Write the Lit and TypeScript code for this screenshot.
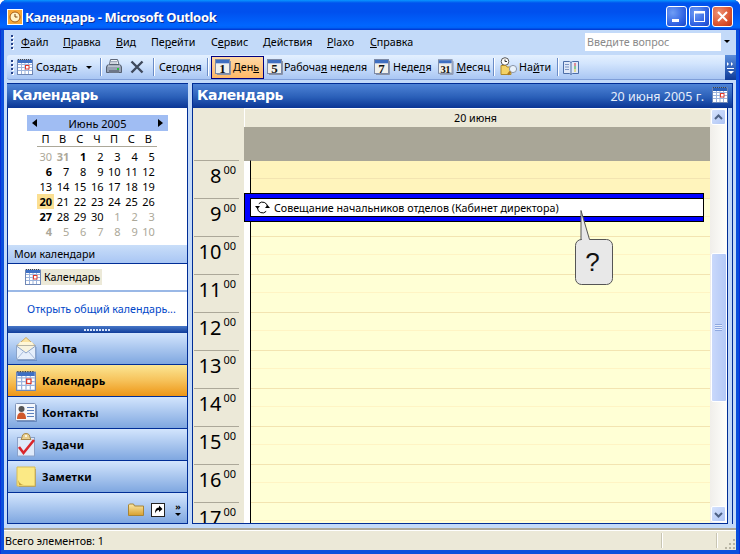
import { LitElement, html, css } from "lit";
import { customElement } from "lit/decorators.js";

const calIcon = (w = 16, h = 16, hd = "#3d6fc4") => html`<svg width=${w} height=${h} viewBox="0 0 16 16">
  <rect x=".5" y="1" width="15" height="14.5" fill="#fff" stroke="#6f87b5"/>
  <rect x="1" y="1" width="14" height="3" fill=${hd}/>
  <path d="M1 0.5h14" stroke="#444" stroke-dasharray="1 1"/>
  <path d="M1 5.5h14M1 8.5h14M1 11.5h14M4.5 4v11M8 4v11M11.5 4v11" stroke="#9db4dc"/>
  <rect x="8.5" y="6.5" width="3.5" height="3.5" fill="#fff" stroke="#e0392b"/>
</svg>`;

const pageIcon = (n: string) => html`<svg width="16" height="16" viewBox="0 0 16 16">
  <rect x=".5" y=".5" width="14" height="14" fill="#f1f1ec" stroke="#7d8aa6"/>
  <rect x="1" y="1" width="13" height="3" fill="#3f6fc0"/>
  <path d="M1 4.500h13" stroke="#b9c7e2"/>
  <path d="M15.500 2v13.500H2" fill="none" stroke="#8a93a8"/>
  <text x="7.500" y="14" text-anchor="middle" class=${n.length > 1 ? "num two" : "num"}>${n}</text>
</svg>`;

const printIcon = html`<svg width="16" height="16" viewBox="0 0 16 16">
  <path d="M4.500 .5h7l1.500 5h-9.500z" fill="#f4f6fa" stroke="#5d6679"/>
  <path d="M5 2.500h6M5 4h6" stroke="#a5adbf"/>
  <path d="M1.500 6h13l1 2v5.500h-15V8z" fill="#98a2b4" stroke="#555f70"/>
  <path d="M2 7h12" stroke="#dde2ea"/>
  <rect x="3" y="11" width="10" height="3" fill="#6d7688"/>
  <rect x="11" y="9" width="2" height="2" fill="#27c23a"/>
</svg>`;

const xIcon = html`<svg width="14" height="14" viewBox="0 0 14 14"><path d="M1.500 1.500l11 11M12.500 1.500l-11 11" stroke="#3f495c" stroke-width="2.400"/></svg>`;

const findIcon = html`<svg width="18" height="20" viewBox="0 0 18 20">
  <circle cx="5" cy="4.500" r="3.800" fill="#fff" stroke="#555"/>
  <path d="M5 2.500v2h2" fill="none" stroke="#333"/>
  <path d="M1 8.500h5l1 1.500h4v7.500H1z" fill="#f3d266" stroke="#b08a2a"/>
  <circle cx="13" cy="12" r="3.600" fill="#e9f2fb" stroke="#8c97a8"/>
  <path d="M10.500 14.500l-2.500 3" stroke="#b07a20" stroke-width="2"/>
</svg>`;

const bookIcon = html`<svg width="16" height="15" viewBox="0 0 16 15">
  <path d="M.5 1.500h6l1.500 1 1.500-1h6v12h-6L8 14.500l-1.500-1h-6z" fill="#dfe8f8" stroke="#4c6ea8"/>
  <path d="M8 2.500v11.500" stroke="#4c6ea8"/>
  <path d="M2 4.500h4M2 7h4M2 9.500h4" stroke="#7b95c4"/>
  <path d="M12 3v3" stroke="#d33"/><path d="M12 6v3" stroke="#3a3"/><path d="M12 9v3" stroke="#dc3"/>
</svg>`;

const mailIcon = html`<svg width="22" height="24" viewBox="0 0 22 24">
  <path d="M1.500 9L11 .5 20.500 9z" fill="#fbe3a0" stroke="#c9a86a"/>
  <path d="M5 5h12l2 3H3z" fill="#fff6d6"/>
  <rect x="1.500" y="9" width="19" height="13.500" fill="#e6effb" stroke="#8ba3c8"/>
  <path d="M1.500 9l9.500 7 9.500-7" fill="#f8f3de" stroke="#8ba3c8"/>
  <path d="M1.500 22.500l7-8M20.500 22.500l-7-8" stroke="#a9bcda" fill="none"/>
  <path d="M2.500 23.500h19.500V10" stroke="#5b7fb8" fill="none" opacity=".6"/>
</svg>`;

const contactsIcon = html`<svg width="22" height="19" viewBox="0 0 22 19">
  <rect x=".5" y=".5" width="20" height="17" rx="1" fill="#f4f7fc" stroke="#7e93b8"/>
  <circle cx="6.500" cy="6" r="3" fill="#555"/>
  <path d="M2 16c0-5 2-6.500 4.500-6.500S11 11 11 16z" fill="#d0582a"/>
  <path d="M12 4.500h7M12 7.500h7M12 10.500h7M12 13.500h7" stroke="#5f82bd"/>
  <path d="M21.500 2v16.500H2" fill="none" stroke="#4d6da5" opacity=".6"/>
</svg>`;

const tasksIcon = html`<svg width="20" height="24" viewBox="0 0 20 24">
  <rect x="1.500" y="4.500" width="17" height="18.500" fill="#dfeafa" stroke="#8aa1c8"/>
  <path d="M6 4.500c0-2 1-4 4-4s4 2 4 4l1 2H5z" fill="#e8cf8f" stroke="#a9894a"/>
  <circle cx="10" cy="3" r="1" fill="#fff"/>
  <path d="M3 14l4.500 6L18 7" fill="none" stroke="#d9262c" stroke-width="2.600"/>
</svg>`;

const notesIcon = html`<svg width="20" height="22" viewBox="0 0 20 22">
  <path d="M1 1h18v19H1z" fill="#fbe985" stroke="#d9bd55"/>
  <path d="M2 14c2 4 4 5 7 5H3z" fill="#c9a53a"/>
  <path d="M19.500 3v17.500H3" fill="none" stroke="#b59a50" opacity=".7"/>
</svg>`;

const folderIcon = html`<svg width="16" height="13" viewBox="0 0 16 13">
  <defs><linearGradient id="fg" x1="0" y1="0" x2="0" y2="1"><stop offset="0" stop-color="#fbeaa8"/><stop offset="1" stop-color="#d89f2e"/></linearGradient></defs>
  <path d="M.5 12.500V2l1-1h4l1 2h9v9.500z" fill="url(#fg)" stroke="#a88435"/>
</svg>`;

const shortcutIcon = html`<svg width="14" height="14" viewBox="0 0 14 14">
  <rect x=".5" y=".5" width="13" height="13" fill="#fff" stroke="#222"/>
  <path d="M4 11c0-4 1-5.500 4-6V3l3.500 3.500L8 9.500V7.500C6 7.500 5 9 4 11z" fill="#000" transform="translate(0 -.5)"/>
</svg>`;

const recurIcon = html`<svg width="15" height="13" viewBox="0 0 15 13">
  <path d="M12.500 6A5 5 0 0 0 3.800 2.700M2.500 7a5 5 0 0 0 8.700 3.300" fill="none" stroke="#000"/>
  <path d="M0 5.500h5L2.500 8.500zM10 7.500h5l-2.500-3z" fill="#000" transform="translate(0 -.5)"/>
</svg>`;

const label = (t: string, u: number) =>
  html`<span>${t.slice(0, u)}<u>${t[u]}</u>${t.slice(u + 1)}</span>`;

const MENU = [
  { t: "Файл", u: 0, w: 42 }, { t: "Правка", u: 0, w: 53 }, { t: "Вид", u: 0, w: 35 },
  { t: "Перейти", u: 2, w: 60 }, { t: "Сервис", u: 1, w: 52 }, { t: "Действия", u: 0, w: 64 },
  { t: "Plaxo", u: 0, w: 43 }, { t: "Справка", u: 0, w: 60 },
];

const WEEKS = [
  [["30","m"],["31","mb"],["1","b"],["2",""],["3",""],["4",""],["5",""]],
  [["6","b"],["7",""],["8",""],["9",""],["10",""],["11",""],["12",""]],
  [["13",""],["14",""],["15",""],["16",""],["17",""],["18",""],["19",""]],
  [["20","t"],["21",""],["22",""],["23",""],["24",""],["25",""],["26",""]],
  [["27","b"],["28",""],["29",""],["30",""],["1","m"],["2","m"],["3","m"]],
  [["4","mb"],["5","m"],["6","m"],["7","m"],["8","m"],["9","m"],["10","m"]],
];

const NAV = [
  { t: "Почта", i: mailIcon },
  { t: "Календарь", i: calIcon(22, 20), sel: true },
  { t: "Контакты", i: contactsIcon },
  { t: "Задачи", i: tasksIcon },
  { t: "Заметки", i: notesIcon },
];

const HOURS = [8, 9, 10, 11, 12, 13, 14, 15, 16, 17];

@customElement("app-root")
export class AppRoot extends LitElement {
  static styles = css`
    :host { display: block; width: 740px; height: 554px; overflow: hidden; background: #fff;
      font-family: "Noto Sans", "DejaVu Sans", sans-serif; font-size: 10.7px; color: #000; }
    * { box-sizing: border-box; }
    u { text-underline-offset: 1px; }
    .win { height: 554px; display: flex; flex-direction: column; border-radius: 7px 7px 0 0; overflow: hidden; background: #0a4fdc; box-shadow: inset 1px 0 #0831d9, inset -1px 0 #0831d9; }
    .title { height: 30px; flex: none; display: flex; align-items: center; padding: 3px 7px 0 7px;
      background: linear-gradient(#0997ff 0, #0053ee 10%, #0050ee 40%, #0066ff 85%, #0061f5 93%, #003dd7 97%, #003dd7 100%); }
    .tlogo { width: 16px; height: 16px; margin-right: 2px; flex: none; background: #f5a83a; border: 1px solid #fff; display: grid; place-items: center; }
    .ttext { font: bold 13px "Noto Sans", sans-serif; letter-spacing: -.35px; color: #fff; text-shadow: 1px 1px 0 #0a2f9c; white-space: nowrap; }
    .tbtns { margin-left: auto; display: flex; gap: 2px; }
    .tb { width: 21px; height: 21px; border: 1px solid #fff; border-radius: 3px; background: radial-gradient(circle at 30% 30%, #6f9df5, #2a5ce0 70%, #1d46c0); display: grid; place-items: center; }
    .tb.close { background: radial-gradient(circle at 30% 30%, #ef9274, #d9502c 65%, #b8341b); }

    .client { flex: 1; margin: 0 4px; background: #c3daf9; display: flex; flex-direction: column; min-height: 0; }
    .menu { height: 25px; flex: none; display: flex; align-items: center; padding: 0 0 2px 3px; }
    .grip { flex: none; width: 10px; display: flex; flex-direction: column; gap: 2px; padding-left: 4px; }
    .grip i { display: block; width: 2px; height: 2px; background: #27438a; box-shadow: 1px 1px 0 #fff; }
    .mitem { flex: none; padding-left: 4px; white-space: nowrap; }
    .ask { margin-left: auto; margin-right: 3px; width: 148px; height: 18px; background: #fff; display: flex; align-items: center; padding-left: 2px; color: #8a8a8a; }
    .ask span { flex: 1; }
    .ask b { width: 12px; height: 18px; background: #c3daf9; display: grid; place-items: center; }
    .tri { width: 0; height: 0; border: 3px solid transparent; border-top: 3px solid #000; border-bottom: 0; }
    .tbar { height: 25px; flex: none; margin-left: 3px; display: flex; align-items: center; position: relative; border-radius: 3px 0 0 3px; border-bottom: 1px solid #7f9ed8;
      background: linear-gradient(#e4f0ff, #d3e5fd 35%, #a9c6f3 100%); }
    .ti { flex: none; display: flex; align-items: center; height: 23px; white-space: nowrap; }
    .sp1 { width: 1px; flex: none; }
    .sp2 { width: 2px; flex: none; }
    .sp3 { width: 3px; flex: none; }
    .sep { flex: none; width: 6px; display: flex; justify-content: center; }
    .sep i { display: block; width: 1px; height: 18px; background: #6a8cc8; box-shadow: 1px 0 0 #fff; }
    .ti.on { border: 1px solid #000080; background: linear-gradient(#ffd9a6, #ffb866); padding-left: 3px; margin-left: 1px; }
    .num { font: bold 13px "Liberation Serif", serif; fill: #111; }
    .num.two { font-size: 11px; letter-spacing: -.5px; }
    .chev { position: absolute; right: 0; top: 0; width: 11px; height: 25px; background: linear-gradient(#5a8edc, #0e3a98); display: flex; flex-direction: column; align-items: center; justify-content: center; gap: 2px; }
    .chev i { display: block; width: 7px; height: 1px; background: #fff; }

    .panes { flex: 1; min-height: 0; display: flex; gap: 4px; padding: 3px 0 4px 3px; margin-right: 3px; }
    .left { width: 181px; flex: none; display: flex; flex-direction: column; border: 1px solid #002d96; border-top: 0; background: #fff; }
    .right { flex: 1; min-width: 0; display: flex; flex-direction: column; border-right: 1px solid #002d96; border-left: 1px solid #002d96; background: #c3daf9; }
    .phead { height: 25px; flex: none; display: flex; align-items: center; padding: 0 0 2px 4px; color: #fff; border-top: 1px solid #002d96;
      background: linear-gradient(#4f84d6, #2a5fb8 55%, #0a3595); font: bold 14px "DejaVu Sans", sans-serif; letter-spacing: -.45px; }
    .left .phead { margin: 0 -1px; padding-left: 5px; width: 181px; }
    .pdate { margin-left: auto; margin: 2px 8px 0 auto; font: 12.5px "Noto Sans", sans-serif; color: #e6eefc; letter-spacing: 0; }

    .cal { height: 137px; flex: none; padding: 7px 0 0 19px; font-size: 11px; }
    .mon { width: 141px; height: 16px; background: #a0bdf3; display: flex; align-items: center; justify-content: space-between; padding: 0 5px; }
    .larr { border: 4px solid transparent; border-right: 5px solid #000; border-left: 0; }
    .rarr { border: 4px solid transparent; border-left: 5px solid #000; border-right: 0; }
    .dow, .days { display: grid; grid-template-columns: repeat(7, 17.14px); margin-left: 10px; width: 120px; }
    .dow { height: 15px; box-sizing: content-box; border-bottom: 1px solid #aca899; align-items: center; text-align: center; }
    .days { grid-auto-rows: 15px; align-items: center; margin-top: 2px; }
    .d { text-align: right; padding-right: 2px; line-height: 15px; }
    .d.b { font-weight: 700; }
    .d.m { color: #aca899; }
    .d.mb { color: #aca899; font-weight: 700; }
    .d.t { background: #fbdf92; font-weight: 700; }

    .mine { height: 19px; flex: none; display: flex; align-items: center; padding-left: 6px; background: linear-gradient(#c9def9, #a9c6f4); border-bottom: 1px solid #002d96; }
    .mylist { height: 28px; flex: none; padding: 5px 0 0 17px; display: flex; align-items: flex-start; border-bottom: 2px solid #9ab8e6; }
    .mylist span { background: #ece9d8; height: 16px; width: 61px; display: flex; align-items: center; padding-left: 3px; }
    .open { height: 34px; flex: none; display: flex; align-items: center; padding: 0 0 1px 19px; color: #0046c8; white-space: nowrap; }
    .split { height: 7px; flex: none; background: linear-gradient(#4777c8, #103d9a); display: flex; justify-content: center; align-items: center; gap: 1px; padding-right: 2px; }
    .split i { width: 2px; height: 2px; background: #d6e4fb; }
    .nav { height: 32px; flex: none; display: flex; align-items: center; border-bottom: 1px solid #002d96; background: linear-gradient(#d3e5fd, #7fa7e0); font-weight: 700; font-size: 11px; letter-spacing: .2px; }
    .nav.sel { background: linear-gradient(#fbe694, #f6c25a 50%, #ee9616); }
    .nico { width: 34px; flex: none; display: flex; justify-content: center; padding-left: 2px; }
    .foot { flex: 1; display: flex; align-items: center; padding: 3px 6px 0 120px; background: linear-gradient(#d3e5fd, #7fa7e0); }
    .f1 { margin-right: 7px; display: flex; }
    .f2 { margin-right: 10px; display: flex; }
    .more { width: 7px; display: flex; flex-direction: column; align-items: center; gap: 2px; font-size: 9px; line-height: 8px; font-weight: 700; }

    .view { flex: 1; min-height: 0; display: flex; background: #fff; margin-right: 4px; border-right: 1px solid #002d96; border-bottom: 1px solid #002d96; }
    .times { width: 51px; flex: none; background: #ece9d8; overflow: hidden; padding-top: 52px; padding-left: 1px; }
    .hr { height: 38px; width: 45px; border-top: 1px solid #aca899; display: flex; justify-content: flex-end; align-items: flex-start; padding-top: 3px; }
    .hr b { font: 20px/24px "Noto Sans", sans-serif; }
    .hr s { text-decoration: none; font: 11px/13px "Noto Sans", sans-serif; margin: -1px 3px 0 2px; }
    .day { flex: 1; min-width: 0; display: flex; flex-direction: column; position: relative; overflow: hidden; }
    .dhead { height: 19px; flex: none; background: #ece9d8; text-align: center; line-height: 18px; border-top: 1px solid #fff; border-left: 1px solid #fff; padding-right: 4px; }
    .band { height: 33px; flex: none; background: #a9a697; }
    .grid { flex: 1; min-height: 0; display: flex; position: relative; }
    .strip { width: 7px; flex: none; background: #fff; border-right: 1px solid #000; border-top: 1px solid #a9a697; }
    .rows { flex: 1; overflow: hidden; }
    .row { height: 38px; background: #ffffd5; border-top: 1px solid #f3e4b1; }
    .row i { display: block; height: 18px; border-bottom: 1px solid #fff4c4; }
    .row.off { background: #fff4bc; border-top-color: #a9a697; }
    .row.off i { border-bottom-color: #f3e4b1; }
    .event { position: absolute; left: 0; top: 33px; width: 460px; height: 29px; background: #0000ff; border: 1px solid #000; padding: 4px 0; }
    .einner { height: 19px; margin-left: 5px; background: #fff; border-top: 1px solid #000; border-bottom: 1px solid #000; border-left: 1px solid #000; display: flex; align-items: center; gap: 4px; padding-left: 4px; white-space: nowrap; }
    .bubble { position: absolute; left: 330px; top: 50px; }
    .bubble text { font: 26px "Liberation Sans", sans-serif; fill: #111; }

    .sb { width: 17px; flex: none; display: flex; flex-direction: column; align-items: center; background: linear-gradient(90deg, #f0eeea, #fefefb); padding: 1px 0; }
    .sbtn { width: 15px; height: 16px; flex: none; border: 1px solid #fff; border-radius: 2px; background: linear-gradient(135deg, #d5e2fd, #afc5f5); display: grid; place-items: center; }
    .thumb { width: 16px; height: 149px; flex: none; margin-top: 128px; border: 1px solid #fff; border-radius: 2px; background: linear-gradient(90deg, #c9d8fb, #b4c9f6); display: grid; place-items: center; }
    .thumb i { display: block; width: 7px; height: 7px; background: repeating-linear-gradient(#8ea8e0 0 1px, #e4ecfd 1px 2px); }
    .sbsp { flex: 1; }

    .status { height: 22px; flex: none; background: #ece9d8; border-top: 2px solid #aca899; display: flex; flex-direction: row; align-items: center; padding: 2px 0 0 1px; position: relative; box-shadow: inset 0 1px 0 #fff; }
    .status .v { position: absolute; top: 3px; width: 1px; height: 15px; background: #fff; box-shadow: -1px 0 0 #c8c5b3; }
    .v.a { left: 658px; } .v.b { left: 713px; }
    .sgrip { position: absolute; right: 1px; bottom: 1px; }
    .bottom { height: 4px; flex: none; }
  `;

  render() {
    const g = html`<div class="grip">${[0, 1, 2, 3].map(() => html`<i></i>`)}</div>`;
    const sep = html`<div class="sep"><i></i></div>`;
    return html`
    <div class="win">
      <div class="title">
        <div class="tlogo"><svg width="12" height="12" viewBox="0 0 12 12"><circle cx="6" cy="6" r="5" fill="#fff3c8" stroke="#a65a10"/><path d="M6 3v3h2.500" fill="none" stroke="#7a4208"/></svg></div>
        <div class="ttext">Календарь - Microsoft Outlook</div>
        <div class="tbtns">
          <div class="tb"><svg width="13" height="13"><rect x="2" y="9" width="7" height="3" fill="#fff"/></svg></div>
          <div class="tb"><svg width="13" height="13"><rect x="1.500" y="1.500" width="10" height="10" fill="none" stroke="#fff"/><rect x="1" y="1" width="11" height="2.500" fill="#fff"/></svg></div>
          <div class="tb close"><svg width="13" height="13"><path d="M2 2l9 9M11 2l-9 9" stroke="#fff" stroke-width="2"/></svg></div>
        </div>
      </div>
      <div class="client">
        <div class="menu">
          ${g}
          ${MENU.map((m) => html`<div class="mitem" style="width:${m.w}px">${label(m.t, m.u)}</div>`)}
          <div class="ask"><span>Введите вопрос</span><b><div class="tri"></div></b></div>
        </div>
        <div class="tbar">
          ${g}
          <div class="ti" style="width:80px">${calIcon()}<span class="sp3"></span>${label("Создать", 5)}<span style="width:8px"></span><div class="tri"></div></div>
          ${sep}
          <div class="ti" style="width:21px;padding-left:3px">${printIcon}</div>
          <div class="ti" style="width:26px;padding-left:6px">${xIcon}</div>
          ${sep}
          <div class="ti" style="width:48px;padding-left:3px">${label("Сегодня", 2)}</div>
          ${sep}
          <div class="ti on" style="width:53px">${pageIcon("1")}<span class="sp2"></span>${label("День", 3)}</div>
          <div class="ti" style="width:106px;padding-left:3px">${pageIcon("5")}<span class="sp1"></span>${label("Рабочая неделя", 6)}</div>
          <div class="ti" style="width:65px;padding-left:4px">${pageIcon("7")}<span class="sp3"></span>${label("Неделя", 4)}</div>
          <div class="ti" style="width:55px;padding-left:3px">${pageIcon("31")}<span class="sp3"></span>${label("Месяц", 0)}</div>
          ${sep}
          <div class="ti" style="width:58px;padding-left:4px">${findIcon}<span class="sp1"></span>${label("Найти", 2)}</div>
          ${sep}
          <div class="ti" style="width:20px;padding-left:3px">${bookIcon}</div>
          <div class="chev">
            <svg width="7" height="4"><path d="M0 0l2 2-2 2zM4 0l2 2-2 2z" fill="#fff"/></svg>
            <i></i>
            <div class="tri" style="border-top-color:#fff"></div>
          </div>
        </div>
        <div class="panes">
          <div class="left">
            <div class="phead">Календарь</div>
            <div class="cal">
              <div class="mon"><span class="larr"></span><span>Июнь 2005</span><span class="rarr"></span></div>
              <div class="dow">${["П","В","С","Ч","П","С","В"].map((d) => html`<span>${d}</span>`)}</div>
              <div class="days">${WEEKS.flat().map(([t, c]) => html`<div class="d ${c}">${t}</div>`)}</div>
            </div>
            <div class="mine">Мои календари</div>
            <div class="mylist">${calIcon()}<span>Календарь</span></div>
            <div class="open">Открыть общий календарь...</div>
            <div class="split">${Array.from({ length: 9 }, () => html`<i></i>`)}</div>
            ${NAV.map((n) => html`<div class="nav ${n.sel ? "sel" : ""}"><div class="nico">${n.i}</div>${n.t}</div>`)}
            <div class="foot"><span class="f1">${folderIcon}</span><span class="f2">${shortcutIcon}</span><div class="more"><span>»</span><div class="tri"></div></div></div>
          </div>
          <div class="right">
            <div class="phead">Календарь<span class="pdate">20 июня 2005 г.</span>${calIcon(16, 16, "#2a5fb8")}<span style="width:4px"></span></div>
            <div class="view">
              <div class="times">
                ${HOURS.map((h) => html`<div class="hr"><b>${h}</b><s>00</s></div>`)}
              </div>
              <div class="day">
                <div class="dhead">20 июня</div>
                <div class="band"></div>
                <div class="grid">
                  <div class="strip"></div>
                  <div class="rows">${HOURS.map((h) => html`<div class="row ${h === 8 ? "off" : ""}"><i></i></div>`)}</div>
                  <div class="event"><div class="einner">${recurIcon}<span>Совещание начальников отделов (Кабинет директора)</span></div></div>
                  <div class="bubble">
                    <svg width="42" height="78" viewBox="0 0 42 78">
                      <path d="M7 29.500V0.500L15.500 29.500H32.500a6 6 0 0 1 6 6v33a6 6 0 0 1-6 6h-25a6 6 0 0 1-6-6v-33a6 6 0 0 1 6-6z" fill="#e8e8e8" stroke="#555"/>
                      <text x="18.500" y="61" text-anchor="middle">?</text>
                    </svg>
                  </div>
                </div>
              </div>
              <div class="sb">
                <div class="sbtn"><svg width="9" height="7"><path d="M1 5l3.500-3.500L8 5" fill="none" stroke="#4d6185" stroke-width="2"/></svg></div>
                <div class="thumb"><i></i></div>
                <div class="sbsp"></div>
                <div class="sbtn"><svg width="9" height="7"><path d="M1 2l3.500 3.500L8 2" fill="none" stroke="#4d6185" stroke-width="2"/></svg></div>
              </div>
            </div>
          </div>
        </div>
      </div>
      <div class="client status" style="flex:none">
        <span>Всего элементов: 1</span>
        <i class="v a"></i><i class="v b"></i>
        <svg class="sgrip" width="12" height="12"><path d="M10 2h2v2h-2zM6 6h2v2H6zM10 6h2v2h-2zM2 10h2v2H2zM6 10h2v2H6zM10 10h2v2h-2z" fill="#b8b5a4"/></svg>
      </div>
      <div class="bottom"></div>
    </div>`;
  }
}
